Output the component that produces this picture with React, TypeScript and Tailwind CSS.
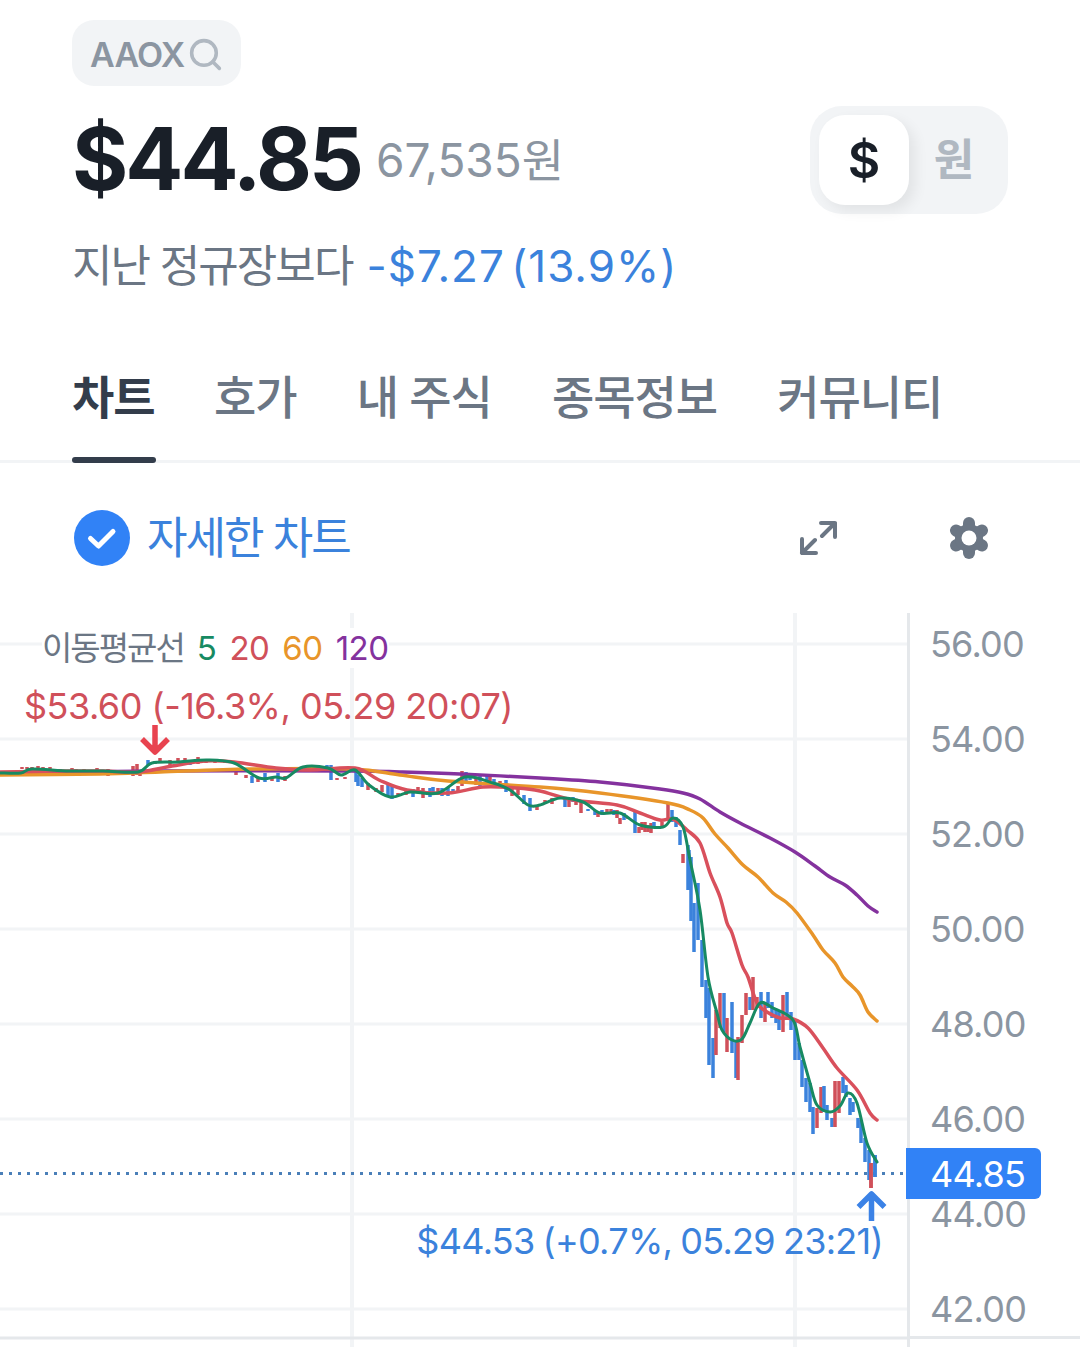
import React from 'react';
import { Search } from 'lucide-react';

const FONT = 'font-["Inter","Noto_Sans_CJK_KR",sans-serif]';

const RED = '#d0505a';
const BLUE = '#3b82dc';

// Catmull-Rom through the points, so the averages don't look like polylines
const smooth = (p: number[][]) => {
  let d = `M${p[0][0]} ${p[0][1]}`;
  for (let i = 0; i < p.length - 1; i++) {
    const a = p[Math.max(i - 1, 0)];
    const b = p[i];
    const c = p[i + 1];
    const e = p[Math.min(i + 2, p.length - 1)];
    d += `C${b[0] + (c[0] - a[0]) / 6} ${b[1] + (c[1] - a[1]) / 6} ${c[0] - (e[0] - b[0]) / 6} ${c[1] - (e[1] - b[1]) / 6} ${c[0]} ${c[1]}`;
  }
  return d;
};

const purple = [[0,773],[160,771],[352,771],[400,772],[460,774],[540,778],[600,782],[660,789],[683,793],[700,799],[720,812],[740,823],[770,838],[795,852],[815,866],[830,877],[845,885],[857,895],[868,906],[877,912]];
const orange = [[0,775],[100,774],[160,772],[250,769],[352,769],[400,775],[448,781],[540,787],[600,793],[668,803],[690,810],[703,818],[715,834],[728,848],[743,865],[758,877],[773,893],[786,902],[797,913],[813,935],[823,950],[835,963],[843,977],[852,986],[860,995],[868,1012],[877,1021]];
const red = [[0,772],[60,771],[103,771],[138,772],[172,766],[205,761],[234,762],[276,768],[310,770],[355,768],[379,780],[407,790],[448,793],[483,787],[517,788],[540,791],[573,800],[617,805],[640,813],[660,820],[673,819],[687,830],[700,843],[710,873],[720,897],[727,923],[732,933],[742,965],[748,977],[757,1003],[767,1012],[780,1018],[793,1019],[808,1028],[823,1048],[837,1068],[857,1090],[870,1113],[877,1120]];
const green = [[0,773],[21,773],[32,769],[69,771],[103,771],[138,772],[152,763],[179,762],[207,760],[234,763],[259,778],[276,777],[286,778],[303,767],[328,768],[341,775],[355,770],[369,785],[390,797],[410,792],[438,793],[465,777],[493,783],[510,790],[528,805],[540,805],[560,798],[583,802],[600,813],[620,813],[640,825],[663,827],[673,818],[683,827],[690,860],[700,910],[708,977],[717,1013],[722,1030],[732,1040],[742,1039],[750,1023],[760,1003],[773,1008],[793,1020],[800,1047],[810,1083],[817,1105],[830,1112],[840,1106],[848,1093],[857,1103],[867,1143],[877,1162]];

// [x, top, bottom, up?] up = red candle
const candles: [number, number, number, number][] = [
  [8,772,774,0],[12,772,774,0],[22,767,769,1],[27,767,769,1],[32,767,769,1],[38,766,768,1],[43,767,769,1],[50,767,769,1],
  [60,769,772,1],[72,768,773,1],[76,769,771,1],[84,769,771,1],[97,768,771,1],[108,769,776,1],[118,771,775,1],[125,771,774,1],
  [133,766,776,1],[137,764,775,1],[140,771,776,1],[148,760,766,0],[155,761,764,1],[160,758,762,1],[170,760,767,1],[178,758,763,1],
  [185,758,762,1],[190,760,765,0],[198,757,764,1],[206,759,763,1],[215,760,763,1],[225,760,763,1],
  [236,768,775,1],[246,775,778,1],[252,776,783,0],[258,777,782,1],[265,773,782,0],[272,777,781,1],[278,773,782,0],[285,776,781,1],
  [303,766,771,1],[310,765,769,1],[318,765,769,1],[327,765,772,0],[331,765,780,0],[337,778,780,1],[345,777,779,1],[350,767,772,1],
  [356,772,782,0],[358,775,786,0],[362,778,787,0],[368,783,790,1],[376,788,792,1],[382,785,792,1],[388,785,797,0],[392,785,799,0],[398,793,796,1],
  [406,790,795,1],[413,789,797,0],[418,787,792,1],[423,788,798,1],[430,788,797,0],[433,787,795,0],[438,788,795,1],[442,788,796,0],[448,787,796,0],[453,789,793,0],[458,786,792,1],
  [462,771,786,1],[466,772,782,0],[470,773,780,0],[476,777,785,1],[480,774,786,0],[487,775,781,0],[490,776,781,1],[494,779,785,0],[500,781,788,1],[506,780,792,0],[512,785,796,1],[518,787,795,1],[524,795,804,0],[530,798,811,0],[537,805,810,1],
  [545,800,803,1],[552,798,804,1],[565,798,807,0],[569,800,807,1],[573,797,802,0],[576,800,805,1],[581,800,813,1],[588,809,811,0],[595,810,815,0],[598,812,817,1],[602,810,815,0],[607,809,813,1],[611,809,812,1],[614,810,815,0],[617,810,818,1],[620,818,824,1],[624,813,820,0],[628,817,819,1],
  [635,811,833,0],[639,827,833,1],[642,822,830,1],[645,822,832,1],[648,825,832,1],[651,823,833,1],[654,822,828,0],[658,826,829,0],[662,822,827,1],[668,802,820,1],[672,810,822,0],[676,817,827,0],[680,830,845,0],[683,854,863,1],
  [688,845,890,0],[689,850,890,0],[691,857,921,0],[694,903,952,0],[698,883,940,0],[702,940,987,0],[706,980,1018,0],[709,988,1065,0],[713,1038,1078,0],
  [716,1010,1055,1],[720,993,1028,1],[724,993,1032,0],[727,1018,1052,1],[732,1002,1053,0],[736,1042,1078,0],[738,1037,1080,1],[742,1015,1043,1],[746,993,1015,1],[750,997,1010,0],[753,977,1010,1],[757,997,1008,1],
  [761,992,1018,0],[765,1003,1022,1],[768,992,1008,0],[772,1002,1018,0],[776,1010,1023,0],[779,1010,1030,0],[783,995,1032,1],[787,992,1018,0],[791,1012,1030,0],[795,1022,1060,0],[799,1043,1060,0],
  [802,1060,1087,0],[806,1078,1102,0],[810,1083,1112,0],[813,1107,1134,0],[817,1108,1128,1],[821,1087,1113,1],[824,1086,1112,0],[827,1105,1120,0],[832,1118,1127,0],[835,1081,1127,1],[839,1081,1113,1],[843,1077,1093,0],[846,1085,1097,0],[850,1098,1115,0],[853,1102,1112,0],[858,1118,1128,0],[861,1120,1143,0],[865,1138,1162,0],[869,1150,1180,0],[875,1155,1177,0],[871,1163,1188,1],
];

const gridY = [644, 739, 834, 929, 1024, 1119, 1214, 1309];
const axis = ['56.00', '54.00', '52.00', '50.00', '48.00', '46.00', '44.00', '42.00'];
const tabs = ['호가', '내 주식', '종목정보', '커뮤니티'];

const Chart = () => (
  <svg viewBox="0 613 907 734" className="block h-[734px] w-[907px]">
    {gridY.map(y => <line key={y} x1="0" x2="907" y1={y} y2={y} stroke="#f2f4f6" strokeWidth="3" />)}
    <line x1="352" x2="352" y1="613" y2="1347" stroke="#f2f4f6" strokeWidth="4" />
    <line x1="795" x2="795" y1="613" y2="1347" stroke="#f2f4f6" strokeWidth="4" />
    <line x1="0" x2="907" y1="1338" y2="1338" stroke="#e5e8eb" strokeWidth="3" />
    {candles.map(([x, t, b, up], i) => (
      <rect key={i} x={x - 1.75} y={t} width="3.5" height={b - t} fill={up ? RED : BLUE} />
    ))}
    <line x1="0" x2="907" y1="1173.5" y2="1173.5" stroke="#4a7fb8" strokeWidth="3" strokeDasharray="3 6" />
    {candles.slice(-2).map(([x, t, b, up]) => (
      <rect key={x} x={x - 1.75} y={t} width="3.5" height={b - t} fill={up ? RED : BLUE} />
    ))}
    <path d={smooth(purple)} fill="none" stroke="#84329e" strokeWidth="3.5" strokeLinecap="round" />
    <path d={smooth(orange)} fill="none" stroke="#e8952a" strokeWidth="3.5" strokeLinecap="round" />
    <path d={smooth(red)} fill="none" stroke="#d9505c" strokeWidth="3.5" strokeLinecap="round" />
    <path d={smooth(green)} fill="none" stroke="#178a62" strokeWidth="3" strokeLinecap="round" />
    {/* high / low arrows */}
    <path d="M155 725V751M142 739L155 752L168 739" fill="none" stroke="#e8434f" strokeWidth="5.5" strokeLinejoin="round" />
    <path d="M871.500 1221V1196M858.500 1207L871.500 1194L884.500 1207" fill="none" stroke="#3b82e6" strokeWidth="5.5" strokeLinejoin="round" />
  </svg>
);

export default function App() {
  return (
    <div className={`${FONT} h-[1347px] w-[1080px] overflow-hidden bg-white`}>
      <div className="pl-[72px] pr-[72px] pt-5">
        <div className="flex h-[66px] w-[169px] items-center gap-[3px] rounded-[22px] bg-[#f2f4f6] pl-[18px] pt-[2px]">
          <span className="text-[34px] font-semibold tracking-[-0.8px] text-[#8b95a1]">AAOX</span>
          <Search size={37} strokeWidth={2.3} className="text-[#b0b8c1]" />
        </div>
        <div className="mt-5 flex h-[108px] items-center justify-between">
          <div className="flex items-center gap-[15px]">
            <span className="mb-[3px] text-[86px] font-bold leading-none tracking-[-3px] text-[#191f28]">$44.85</span>
            <span className="text-[46px] text-[#8b95a1]">67,535원</span>
          </div>
          <div className="flex h-[108px] w-[198px] items-center rounded-[32px] bg-[#f2f4f6] p-[9px]">
            <div className="flex h-[90px] w-[90px] items-center justify-center rounded-[26px] bg-white text-[50px] font-semibold text-[#191f28] shadow-[6px_6px_14px_rgba(0,0,0,0.07)]">$</div>
            <div className="flex h-[90px] flex-1 items-center justify-center text-[44px] font-semibold text-[#b0b8c1]">원</div>
          </div>
        </div>
        <div className="mt-[25px] flex h-[54px] items-center text-[44px]">
          <span className="tracking-[-1.9px] text-[#6b7684]">지난 정규장보다</span>
          <span className="ml-[14px] tracking-[1px] text-[#3b82dc] [word-spacing:-7px]">-$7.27 (13.9%)</span>
        </div>
      </div>

      <div className="mt-[58px] flex h-[112px] border-b-[3px] border-[#f2f4f6] pl-[72px] pt-[11px] text-[46px] tracking-[-1px] text-[#6b7684]">
        <div className="relative h-[100px] w-[82px] whitespace-nowrap font-semibold text-[#333d4b]">
          <span className="leading-[70px]">차트</span>
          <div className="absolute bottom-[-1px] left-0 h-[6px] w-[84px] rounded-full bg-[#333d4b]" />
        </div>
        {tabs.map(t => <span key={t} className="ml-[60px] font-medium leading-[70px]">{t}</span>)}
      </div>

      <div className="flex h-[150px] items-center pl-[74px]">
        <svg width="56" height="56" viewBox="0 0 56 56">
          <circle cx="28" cy="28" r="28" fill="#3182f6" />
          <path d="M16.500 28.500L24.500 36L39 21.500" fill="none" stroke="#fff" strokeWidth="5" strokeLinecap="round" strokeLinejoin="round" />
        </svg>
        <span className="ml-[17px] text-[44px] tracking-[-2px] text-[#3b82dc]">자세한 차트</span>
        <svg width="38" height="38" viewBox="0 0 38 38" className="ml-[449px]">
          <path d="M22 4H36V18M36 4L23 17M16 21L3 34M3 20V34H17" fill="none" stroke="#6b7684" strokeWidth="4" strokeLinecap="round" strokeLinejoin="round" />
        </svg>
        <svg width="44" height="44" viewBox="0 0 44 44" className="ml-[110px]">
          <g stroke="#6b7684" strokeWidth="12" strokeLinecap="round">
            <line x1="22" y1="7" x2="22" y2="37" />
            <line x1="9" y1="14.500" x2="35" y2="29.500" />
            <line x1="35" y1="14.500" x2="9" y2="29.500" />
          </g>
          <circle cx="22" cy="22" r="14" fill="#6b7684" />
          <circle cx="22" cy="22" r="7.500" fill="#fff" />
        </svg>
      </div>

      <div className="flex h-[734px]">
        <div className="relative w-[907px] shrink-0">
          <Chart />
          <div className="absolute left-[42px] top-[15px] flex items-center gap-[13px] bg-white text-[33px] leading-[40px] tracking-[-0.5px]">
            <span className="tracking-[-2px] text-[#6b7684]">이동평균선</span>
            <span className="text-[#178a62]">5</span>
            <span className="text-[#d0505a]">20</span>
            <span className="text-[#e8952a]">60</span>
            <span className="text-[#84329e]">120</span>
          </div>
          <div className="absolute left-[24px] top-[71px] whitespace-nowrap text-[36px] leading-[44px] tracking-[-0.5px] text-[#d0505a]">$53.60 (-16.3%, 05.29 20:07)</div>
          <div className="absolute right-[24px] top-[606px] whitespace-nowrap text-[36px] leading-[44px] tracking-[-0.7px] text-[#3b82dc] [word-spacing:-1.5px]">$44.53 (+0.7%, 05.29 23:21)</div>
        </div>
        <div className="relative flex-1 border-l-[3px] border-[#e5e8eb]">
          <div className="flex h-[726px] flex-col border-b-[3px] border-[#e5e8eb] pl-[20px] pt-[9px]">
            {axis.map(v => <div key={v} className="h-[95px] shrink-0 text-[36px] leading-[44px] tracking-[-0.8px] text-[#8b95a1]">{v}</div>)}
          </div>
          <div className="absolute left-[-4px] top-[535px] flex h-[51px] w-[135px] items-center rounded-r-[6px] bg-[#3182f6] pl-[24px] text-[36px] tracking-[-0.8px] text-white">44.85</div>
        </div>
      </div>
    </div>
  );
}
